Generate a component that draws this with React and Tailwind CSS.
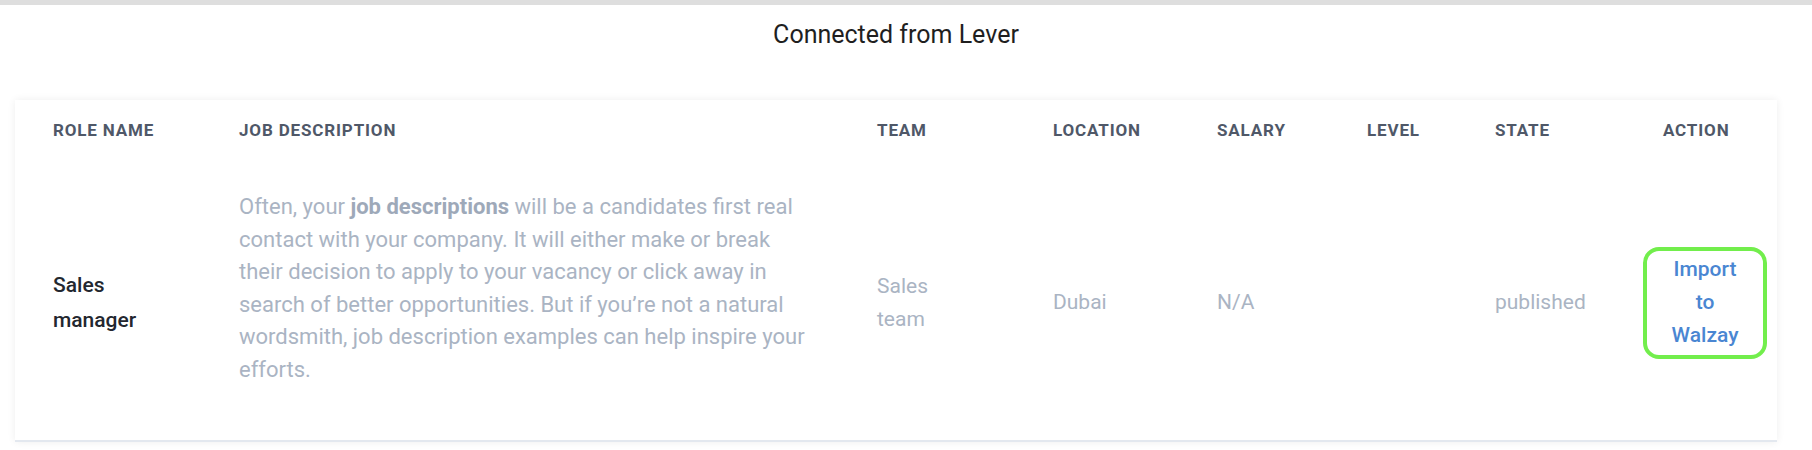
const columns = ["Role name", "Job description", "Team", "Location", "Salary", "Level", "State", "Action"];

const job = {
  role: "Sales manager",
  team: "Sales team",
  location: "Dubai",
  salary: "N/A",
  level: "",
  state: "published",
};

const LeverImport = () => {
  return (
    <div className="w-full h-[450px] bg-white font-['Roboto',sans-serif] overflow-hidden">
      <div className="h-[5px] bg-[#dedede]"></div>

      <div className="ml-[15px] mr-[35px]">
        {/* Heading */}
        <h1 className="pt-[15px] text-center text-[25px] leading-[29px] text-[#1f1f1f]">
          Connected from Lever
        </h1>

        {/* Table card */}
        <div className="mt-[51px] h-[342px] bg-white border-b-2 border-[#e3e8ef] shadow-[0_0_8px_rgba(0,0,0,0.07)] pl-[38px]">
          <div className="grid grid-cols-[186px_638px_176px_164px_150px_128px_138px_144px] pt-[20px]">
            {columns.map((col, i) => (
              <div
                key={col}
                className={`text-[17px] leading-[20px] font-bold uppercase tracking-[0.05em] text-[#4f5868] ${i === 7 ? "pl-[30px]" : ""}`}
              >
                {col}
              </div>
            ))}
          </div>

          <div className="grid grid-cols-[186px_638px_176px_164px_150px_128px_138px_144px] items-center pt-[51px] text-[21px]">
            <div className="w-[90px] leading-[35px] font-medium text-[#23272f]">{job.role}</div>
            <div className="w-[574px] pb-[28px] text-[22px] leading-[32.6px] text-[#aab4c3]">
              Often, your <span className="font-bold text-[#9ea9b9]">job descriptions</span> will be a candidates first real contact with your company. It will either make or break their decision to apply to your vacancy or click away in search of better opportunities. But if you’re not a natural wordsmith, job description examples can help inspire your efforts.
            </div>
            <div className="w-[80px] leading-[33px] text-[#aab4c3]">{job.team}</div>
            <div className="leading-[33px] text-[#aab4c3]">{job.location}</div>
            <div className="leading-[33px] text-[#aab4c3]">{job.salary}</div>
            <div className="leading-[33px] text-[#aab4c3]">{job.level}</div>
            <div className="leading-[33px] text-[#aab4c3]">{job.state}</div>
            <div className="flex justify-center">
              <button className="w-[124px] h-[112px] px-[22px] flex items-center justify-center border-4 border-[#72ee4c] rounded-[16px] text-[21px] leading-[33px] font-medium text-[#4a86d2] text-center">
                Import to Walzay
              </button>
            </div>
          </div>
        </div>
      </div>
    </div>
  );
};

export default function App() {
  return <LeverImport />;
}
